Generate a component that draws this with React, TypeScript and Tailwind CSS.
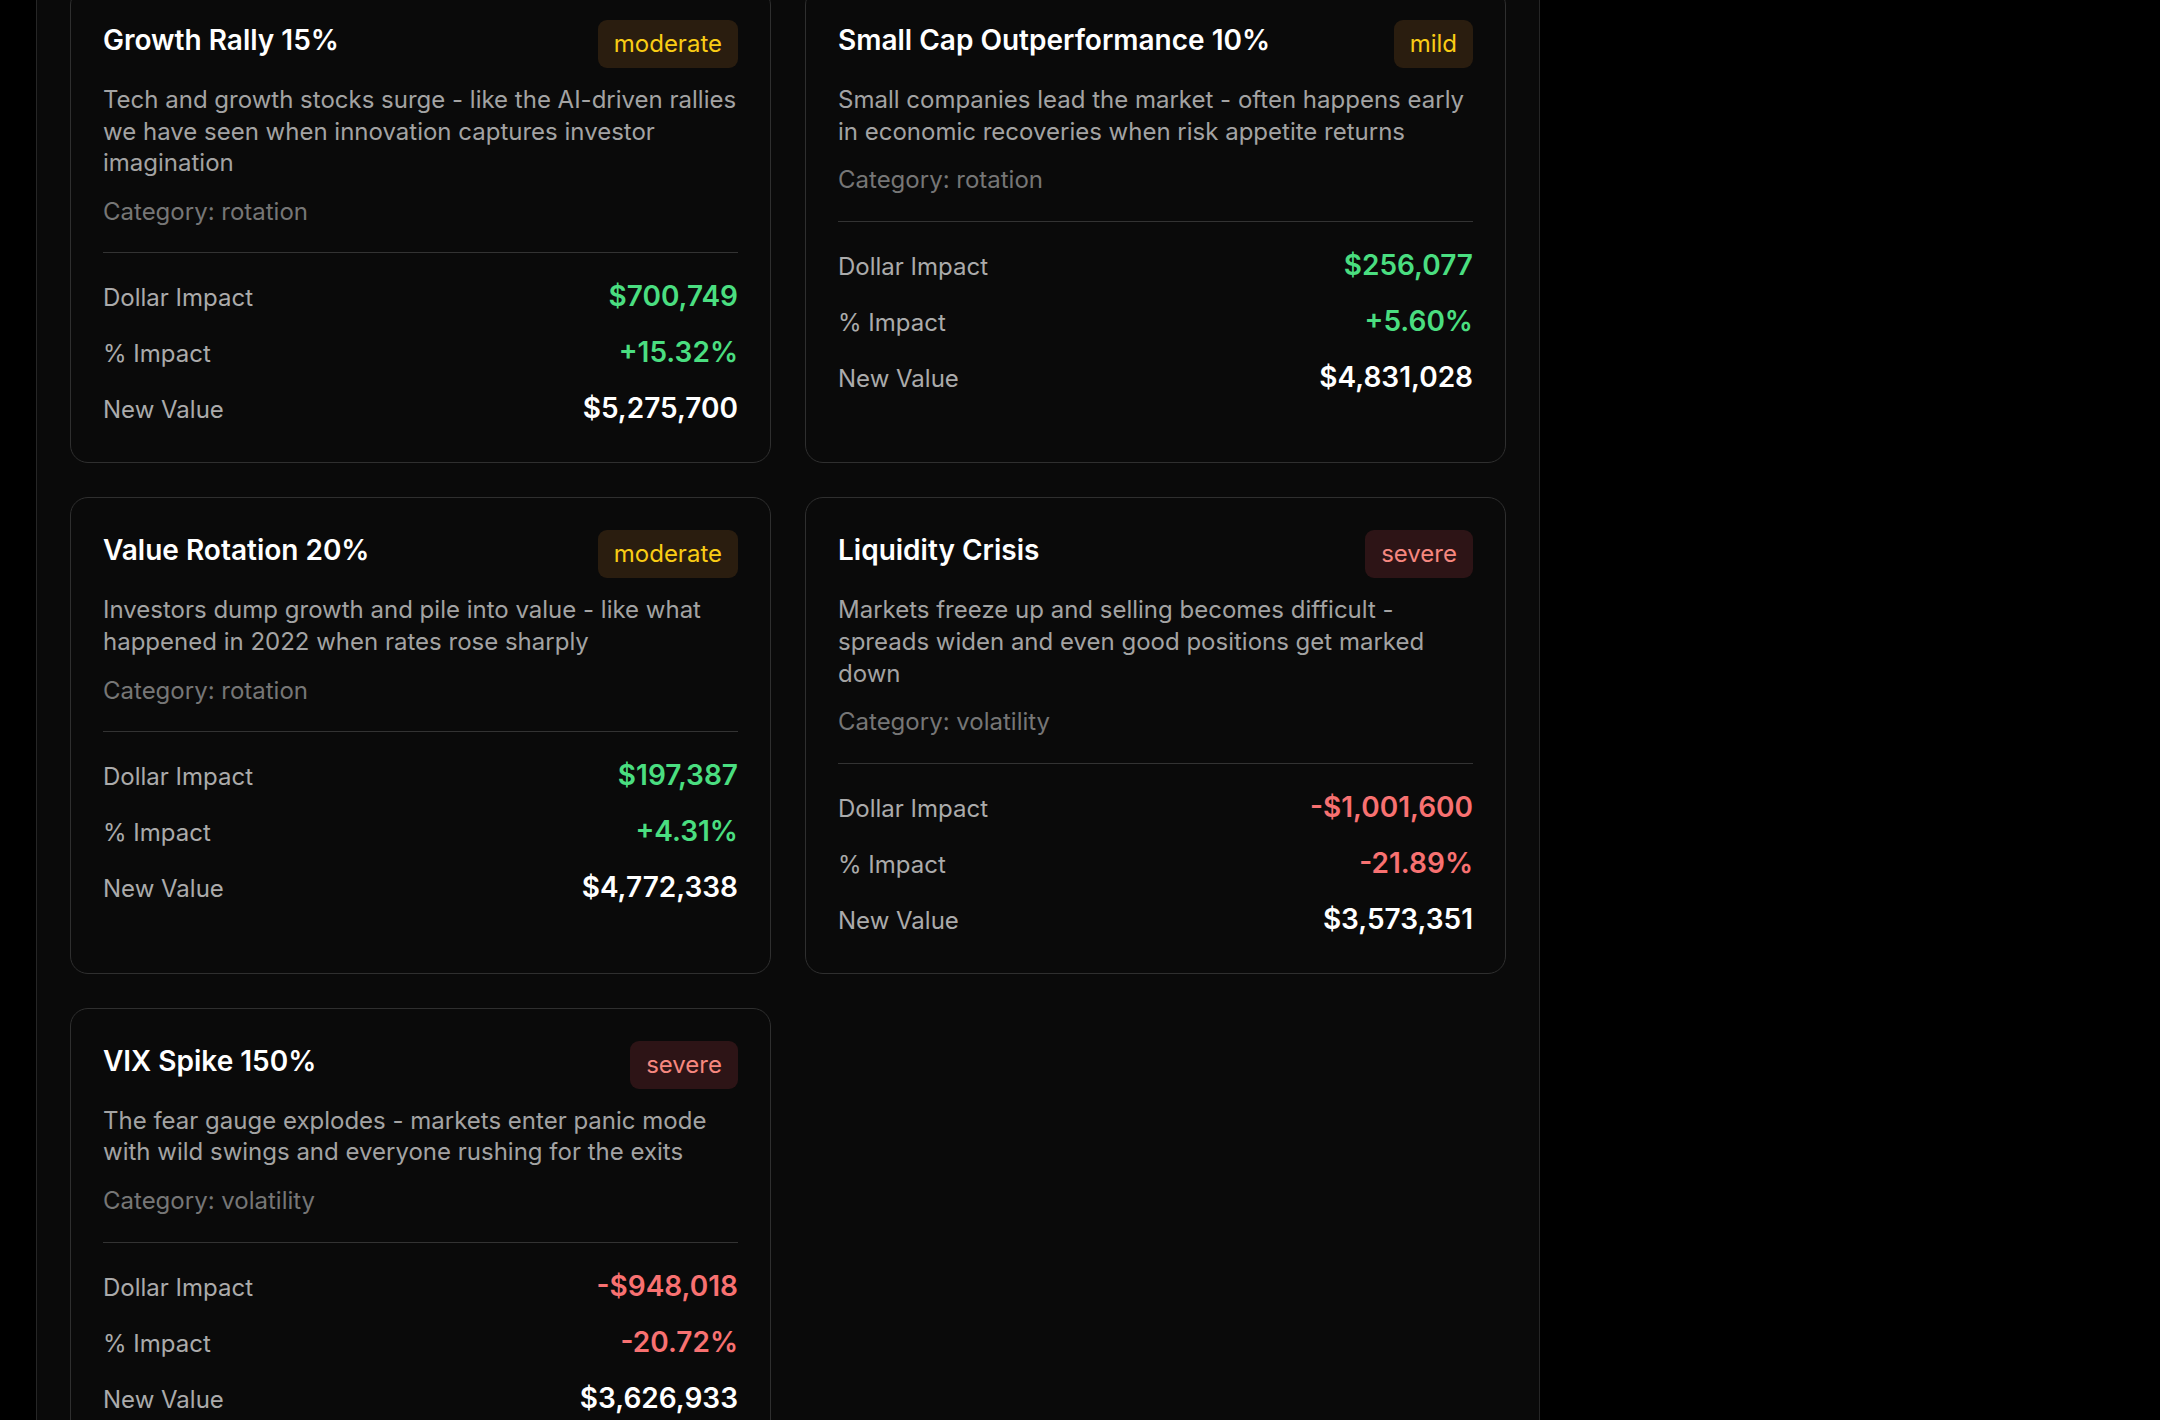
import React from "react";

type Scenario = {
  title: string;
  severity: "mild" | "moderate" | "severe";
  description: string;
  category: string;
  dollar: string;
  pct: string;
  newValue: string;
  positive: boolean;
};

const scenarios: Scenario[] = [
  {
    title: "Growth Rally 15%",
    severity: "moderate",
    description:
      "Tech and growth stocks surge - like the AI-driven rallies we have seen when innovation captures investor imagination",
    category: "rotation",
    dollar: "$700,749",
    pct: "+15.32%",
    newValue: "$5,275,700",
    positive: true,
  },
  {
    title: "Small Cap Outperformance 10%",
    severity: "mild",
    description:
      "Small companies lead the market - often happens early in economic recoveries when risk appetite returns",
    category: "rotation",
    dollar: "$256,077",
    pct: "+5.60%",
    newValue: "$4,831,028",
    positive: true,
  },
  {
    title: "Value Rotation 20%",
    severity: "moderate",
    description:
      "Investors dump growth and pile into value - like what happened in 2022 when rates rose sharply",
    category: "rotation",
    dollar: "$197,387",
    pct: "+4.31%",
    newValue: "$4,772,338",
    positive: true,
  },
  {
    title: "Liquidity Crisis",
    severity: "severe",
    description:
      "Markets freeze up and selling becomes difficult - spreads widen and even good positions get marked down",
    category: "volatility",
    dollar: "-$1,001,600",
    pct: "-21.89%",
    newValue: "$3,573,351",
    positive: false,
  },
  {
    title: "VIX Spike 150%",
    severity: "severe",
    description:
      "The fear gauge explodes - markets enter panic mode with wild swings and everyone rushing for the exits",
    category: "volatility",
    dollar: "-$948,018",
    pct: "-20.72%",
    newValue: "$3,626,933",
    positive: false,
  },
];

function Badge({ severity }: { severity: Scenario["severity"] }) {
  const cls =
    severity === "severe"
      ? "bg-[#2d1416] text-[#f6877f]"
      : "bg-[#2a1d0f] text-[#facc15]";
  return (
    <span
      className={`shrink-0 rounded-[9px] px-[16px] py-[8px] text-[24px] leading-[32px] ${cls}`}
    >
      {severity}
    </span>
  );
}

function Row({
  label,
  value,
  valueClass,
}: {
  label: string;
  value: string;
  valueClass: string;
}) {
  return (
    <div className="flex h-[40px] items-baseline justify-between">
      <span className="text-[24px] leading-[40px] text-[#ababab]">{label}</span>
      <span className={`text-[28px] font-semibold leading-[40px] ${valueClass}`}>
        {value}
      </span>
    </div>
  );
}

function Card({ s }: { s: Scenario }) {
  const impactColor = s.positive ? "text-[#4ade80]" : "text-[#f87171]";
  return (
    <div className="flex flex-col rounded-[18px] border border-[#2f2f2f] bg-[#0a0a0a] px-[32px] pb-[34px] pt-[32px]">
      <div className="flex items-start justify-between gap-4">
        <h3 className="text-[28px] font-semibold leading-[40px] text-white">
          {s.title}
        </h3>
        <Badge severity={s.severity} />
      </div>
      <p className="mr-[-6px] mt-[16px] text-[24px] leading-[31.6px] text-[#a3a3a3]">
        {s.description}
      </p>
      <p className="mt-[17px] text-[24px] leading-[31.6px] text-[#767676]">
        Category: {s.category}
      </p>
      <div className="mt-[25px] border-t border-[#333333] pt-[23px]">
        <div className="flex flex-col gap-[16px]">
          <Row label="Dollar Impact" value={s.dollar} valueClass={impactColor} />
          <Row label="% Impact" value={s.pct} valueClass={impactColor} />
          <Row label="New Value" value={s.newValue} valueClass="text-white" />
        </div>
      </div>
    </div>
  );
}

export default function App() {
  return (
    <div className="h-[1420px] w-full overflow-hidden bg-black font-['Inter',sans-serif]">
      <div className="ml-[36px] h-[1420px] w-[1504px] overflow-hidden border-x border-[#262626] bg-[#0a0a0a] px-[33px]">
        <div className="mt-[-13px] grid grid-cols-2 gap-[34px]">
          {scenarios.map((s) => (
            <Card key={s.title} s={s} />
          ))}
        </div>
      </div>
    </div>
  );
}
